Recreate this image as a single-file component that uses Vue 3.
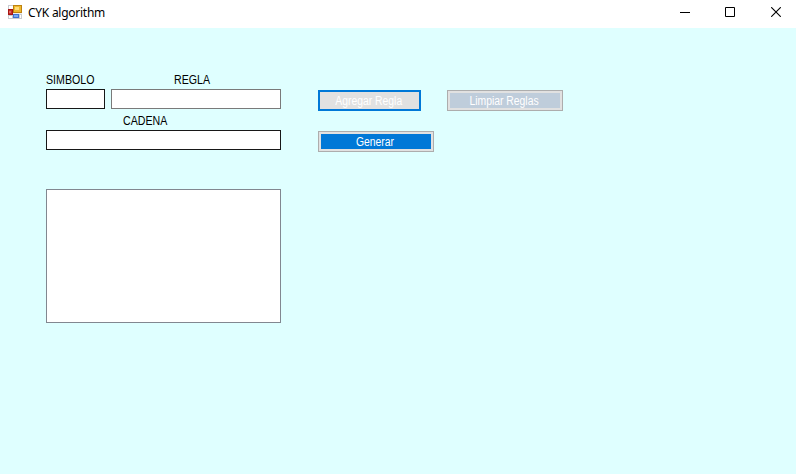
<script setup>
import { ref } from 'vue'

const symbol = ref('')
const rule = ref('')
const chain = ref('')
const output = ref('')
</script>

<template>
  <div class="window">
    <header class="titlebar">
      <svg class="app-icon" width="14" height="14" viewBox="0 0 14 14" shape-rendering="crispEdges">
        <rect width="14" height="14" fill="#c9cbd0" />
        <rect x="1" y="1" width="4" height="3" fill="#fff" />
        <rect x="1" y="11" width="3" height="2" fill="#fff" />
        <rect x="12" y="10" width="1" height="3" fill="#fff" />
        <rect x="0" y="4" width="5" height="6" fill="#a61513" />
        <rect x="1" y="5" width="3" height="4" fill="#c92b26" />
        <rect x="1" y="6" width="2" height="2" fill="#de6a62" />
        <rect x="5" y="0" width="9" height="8" fill="#bd8210" />
        <rect x="6" y="1" width="7" height="6" fill="#efb82c" />
        <rect x="7" y="2" width="4" height="3" fill="#ffdc77" />
        <rect x="5" y="8" width="9" height="1" fill="#eceef2" />
        <rect x="5" y="9" width="6" height="4" fill="#3f72d0" />
        <rect x="6" y="10" width="4" height="2" fill="#79a9f2" />
      </svg>
      <span class="title">CYK algorithm</span>
      <div class="controls">
        <svg width="10" height="10" viewBox="0 0 10 10"><path d="M0 5.5H10" stroke="#000" /></svg>
        <svg width="10" height="10" viewBox="0 0 10 10"><path d="M.5 .5H9.5V9.5H.5Z" fill="none" stroke="#000" /></svg>
        <svg class="close" width="10" height="10" viewBox="0 0 10 10"><path d="M.2 .2L9.8 9.8M9.8 .2L.2 9.8" stroke="#000" stroke-width="1.1" /></svg>
      </div>
    </header>
    <main class="client">
      <section class="fields">
        <div class="pair">
          <label class="field symbol"><span>SIMBOLO</span><input v-model="symbol" class="dark"></label>
          <label class="field rule"><span>REGLA</span><input v-model="rule"></label>
        </div>
        <label class="field chain"><span>CADENA</span><input v-model="chain" class="dark"></label>
        <textarea v-model="output" class="output"></textarea>
      </section>
      <section class="actions">
        <div class="action-row">
          <button class="btn add"><span>Agregar Regla</span></button>
          <button class="btn clear"><span>Limpiar Reglas</span></button>
        </div>
        <button class="btn generate"><span>Generar</span></button>
      </section>
    </main>
  </div>
</template>

<style>
body {
  margin: 0;
  overflow: hidden;
}
</style>

<style scoped>
* {
  box-sizing: border-box;
}
.window {
  display: flex;
  flex-direction: column;
  height: 100vh;
  background: #dfffff;
  color: #000;
}
.titlebar {
  display: flex;
  align-items: center;
  flex: 0 0 28px;
  padding: 0 15px 4px 8px;
  background: #fff;
}
.app-icon {
  margin-right: 6px;
}
.title {
  font: 12px/16px "Noto Sans", sans-serif;
  letter-spacing: -0.26px;
  padding-top: 2px;
}
.controls {
  display: flex;
  gap: 35px;
  margin-left: auto;
}
.controls svg {
  display: block;
}
.controls .close {
  margin-left: 1px;
}
.client {
  display: flex;
  gap: 37px;
  padding: 44px 0 0 46px;
}
.fields {
  display: flex;
  flex-direction: column;
  width: 235px;
}
.pair {
  display: flex;
  gap: 6px;
}
.field {
  display: flex;
  flex-direction: column;
  font: 12px/16px "Liberation Sans", sans-serif;
}
.field span {
  align-self: flex-start;
  height: 17px;
  white-space: nowrap;
  transform: scaleX(0.885);
  transform-origin: left;
}
.symbol {
  width: 59px;
}
.rule {
  width: 170px;
}
.rule span {
  margin-left: 63px;
}
.chain {
  margin-top: 4px;
}
.chain span {
  margin-left: 77px;
}
input,
textarea {
  display: block;
  width: 100%;
  margin: 0;
  padding: 2px;
  border: 1px solid #7a7a7a;
  border-radius: 0;
  outline: 0;
  background: #fff;
  font: 11px "Liberation Sans", sans-serif;
}
input {
  height: 20px;
}
input.dark {
  border-color: #171717;
}
.output {
  height: 134px;
  margin-top: 39px;
  border-color: #828790;
  resize: none;
}
.actions {
  display: flex;
  flex-direction: column;
  gap: 20px;
  padding-top: 18px;
}
.action-row {
  display: flex;
  gap: 26px;
}
.btn {
  width: 116px;
  height: 21px;
  margin: 0;
  padding: 1px 2px 0 0;
  border: 1px solid #adadad;
  border-radius: 0;
  color: #fff;
  font: 12px/15px "Liberation Sans", sans-serif;
  white-space: nowrap;
}
.btn span {
  display: inline-block;
  transform: scaleX(0.865);
}
.add {
  width: 103px;
  padding-right: 1px;
  border: 2px solid #0078d7;
  background: #e1e1e1;
}
.clear {
  background: #bfcddb;
  box-shadow: inset 0 0 0 2px #e1e1e1;
}
.generate {
  background: #0078d7;
  box-shadow: inset 0 0 0 2px #e1e1e1;
}
</style>
